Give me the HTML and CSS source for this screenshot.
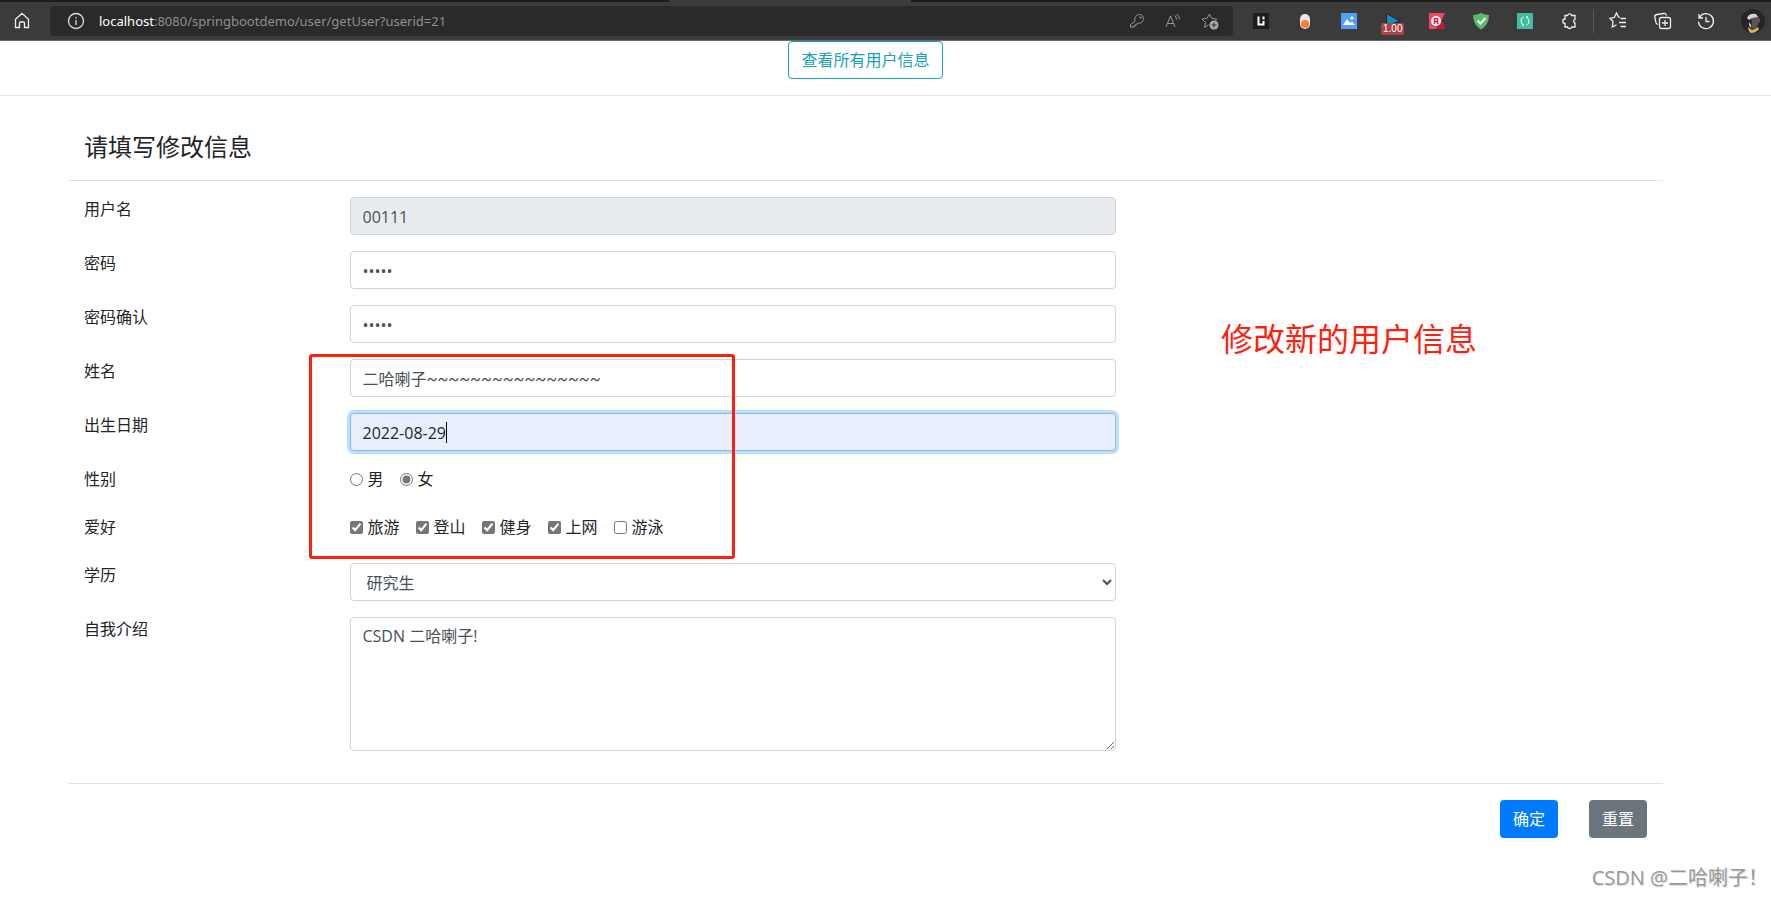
FILE: index.html
```html
<!DOCTYPE html>
<html lang="zh-CN">
<head>
    <meta charset="UTF-8">
    <meta name="viewport" content="width=device-width, initial-scale=1.0">
    <title>修改用户信息</title>
    <link rel="stylesheet" href="styles.css">
</head>
<body>
    <div class="tabs"><div class="tab-active"></div></div>
    <div class="toolbar">
        <button class="tool" type="button" aria-label="Home">
            <svg width="16" height="18" viewBox="0 0 16 18"><path d="M1.5 7.3 8 1.3l6.500 6V15.500h-4V11q0-1-1-1h-3q-1 0-1 1v4.500h-4z"/></svg>
        </button>
        <div class="address">
            <svg class="info" width="18" height="18" viewBox="0 0 18 18"><circle cx="9" cy="9" r="7.500"/><path d="M9 8v5M9 5v1.500"/></svg>
            <div class="url"><span class="host">localhost</span>:8080/springbootdemo/user/getUser?userid=21</div>
            <div class="address-icons">
                <svg width="16" height="16" viewBox="0 0 16 16"><path d="M6 8.500C5 5 7 1.500 10.500 1.500S15 5 14 7.500s-3 3-4.500 2.500L8.500 11H7v1.500H5.500V14H1.500v-2.500z"/><circle cx="11.500" cy="4.500" r=".7"/></svg>
                <svg width="16" height="16" viewBox="0 0 16 16"><path d="M1 14 5.500 3 10 14M2.500 10.500h6M9.500 2.500q2 1.500 2 4M11.500 1q3 2 3 5.500"/></svg>
                <svg width="18" height="18" viewBox="0 0 18 18"><path d="m7.500 13-4 2.500 1-5-3.500-3.500 5-.6L8.500 2l2.200 4.400 5 .6-1.500 1.500"/><circle class="dot" cx="13" cy="13" r="4.500"/><path class="plus" d="M13 10.500v5M10.500 13h5"/></svg>
            </div>
        </div>
        <div class="extensions">
            <svg width="24" height="24" viewBox="0 0 24 24"><path fill="#1e1e1e" d="M4 4h16v16H4z"/><path class="mark" d="M9.500 7.500v8h5v-3.500M14.500 7.500v3"/></svg>
            <svg width="24" height="24" viewBox="0 0 24 24"><rect x="7" y="5" width="10" height="15" rx="5" fill="#e8e6e6"/><circle cx="12" cy="15" r="4" fill="#f58232"/></svg>
            <svg width="24" height="24" viewBox="0 0 24 24"><path fill="#52a0f5" d="M4 4h16v16H4z"/><path fill="#fff" d="m6 16 4-6 3 4 2-1.500 3 3.500z"/><circle cx="15" cy="9" r="1.500" fill="#fff"/></svg>
            <div class="speed">
                <svg width="24" height="24" viewBox="0 0 24 24"><path fill="#118bc2" stroke="#222" d="M5.500 4.500 19 12 5.500 17z"/></svg>
                <span class="badge">1.00</span>
            </div>
            <svg width="24" height="24" viewBox="0 0 24 24"><path fill="#f24560" d="M4 4h16l-4 8 4 8H4z"/><path fill="#c81836" d="m14 14 4-1 2 7h-9z"/><circle cx="11" cy="12" r="5" fill="#fff"/><path fill="none" stroke="#d32042" stroke-width="1.500" d="M9.500 15V9.500h2q1.500 0 1.500 1.500t-1.500 1.500h-2M11.500 12.500l2 2.500"/></svg>
            <svg width="24" height="24" viewBox="0 0 24 24"><path fill="#5cba6b" d="M12 4q4 2 8 2-.2 10-8 14.500Q4.200 16 4 6q4 0 8-2z"/><path class="check" d="m8.500 11.500 3 3 5-5.500"/></svg>
            <svg width="24" height="24" viewBox="0 0 24 24"><path fill="#43bda0" d="M4 4h16v16H4z"/><path class="sync" d="M10.500 8Q7.500 9 8 12.500q.5 2.500 3 3.500l-2 .3M13.500 16q3-1 2.500-4.500-.5-2.500-3-3.500l2-.3"/></svg>
            <svg class="line" width="24" height="24" viewBox="0 0 24 24"><path d="M8 6.500h2.500a2.200 2.200 0 0 1 4.200 0h3.300v4a1.800 1.800 0 0 0 0 3.500v4h-3.300a2.200 2.200 0 0 1-4.200 0H8v-3.500a2.200 2.200 0 0 1 0-4.500z"/></svg>
        </div>
        <div class="browser-icons">
            <svg class="line" width="24" height="24" viewBox="0 0 24 24"><path d="M14 8.500 12.500 8 10.500 4 8.300 8.500 4 9.300l3 3.200L6.300 18l4.200-2.300M14.500 9.500H20M13 13.500h7M14.500 17.500H20"/></svg>
            <svg class="line" width="24" height="24" viewBox="0 0 24 24"><path d="M16.500 6.500Q16 4.200 14 4.500L7 5.500Q4.500 6 4.800 8l1 5q.3 2 2 2.500"/><rect x="9.500" y="8.500" width="11" height="11" rx="2"/><path d="M15 11v6M12 14h6"/></svg>
            <svg class="line" width="24" height="24" viewBox="0 0 24 24"><path d="M5 5v4h4M5.300 8.700a7.500 7.500 0 1 1-.8 4M12 8v4.500h3.500"/></svg>
            <svg class="avatar" width="24" height="24" viewBox="0 0 24 24"><circle cx="12" cy="12" r="12" fill="#252525"/><path fill="#5b5358" d="M10 9q5-3 8 0l-1 7-3 4-4-1 1-5z"/><path fill="#cfd4d8" d="M6 9q2-5 9-4l2 3-6 1-3 2z"/><path fill="#cfd4d8" d="m8 13 2 3v3l-2-3z"/><path fill="#b5425c" d="m17 7 2 4-1 4z"/><path fill="#d6b553" d="m7 18 4 3 3-1 3-2 1 2q-3 4-8 4-3-2-3-6z"/></svg>
        </div>
    </div>

    <div class="page">
        <a class="btn btn-outline" href="#">查看所有用户信息</a>
    </div>
    <hr>

    <div class="page">
        <form class="user-form">
            <h4 class="title">请填写修改信息</h4>
            <div class="form-body">
                <div class="row">
                    <label for="userName">用户名</label>
                    <input class="field" type="text" id="userName" value="00111" readonly>
                </div>
                <div class="row">
                    <label for="password">密码</label>
                    <input class="field" type="password" id="password" value="12345">
                </div>
                <div class="row">
                    <label for="password2">密码确认</label>
                    <input class="field" type="password" id="password2" value="12345">
                </div>
                <div class="row">
                    <label for="realName">姓名</label>
                    <input class="field name" type="text" id="realName" value="二哈喇子~~~~~~~~~~~~~~~~">
                </div>
                <div class="row">
                    <label for="birthday">出生日期</label>
                    <div class="date">
                        <input class="field active" type="text" id="birthday" value="2022-08-29">
                        <span class="caret"></span>
                    </div>
                </div>
                <div class="row row-checks" role="radiogroup" aria-labelledby="sex">
                    <span id="sex">性别</span>
                    <div class="checks">
                        <label><input type="radio" name="sex">男</label>
                        <label><input type="radio" name="sex" checked>女</label>
                    </div>
                </div>
                <div class="row row-checks" role="group" aria-labelledby="hobby">
                    <span id="hobby">爱好</span>
                    <div class="checks">
                        <label><input type="checkbox" checked>旅游</label>
                        <label><input type="checkbox" checked>登山</label>
                        <label><input type="checkbox" checked>健身</label>
                        <label><input type="checkbox" checked>上网</label>
                        <label><input type="checkbox">游泳</label>
                    </div>
                </div>
                <div class="row">
                    <label for="education">学历</label>
                    <select class="field" id="education">
                        <option>研究生</option>
                    </select>
                </div>
                <div class="row">
                    <label for="intro">自我介绍</label>
                    <textarea class="field" id="intro" rows="5">CSDN 二哈喇子!</textarea>
                </div>
            </div>
            <div class="form-footer">
                <button class="btn btn-primary" type="submit">确定</button>
                <button class="btn btn-secondary" type="reset">重置</button>
            </div>
            <!-- notes drawn over the form -->
            <div class="mark-box"></div>
            <div class="mark-text">修改新的用户信息</div>
        </form>
    </div>
    <div class="watermark">CSDN @二哈喇子！</div>
</body>
</html>
```

FILE: styles.css
```css
* {
    box-sizing: border-box;
}

body {
    margin: 0;
    background-color: #fff;
    color: #212529;
    font-family: "Open Sans", "Noto Sans CJK SC", sans-serif;
    font-size: 16px;
    line-height: 24px;
}

input, select, textarea, button {
    font: inherit;
}

/* Browser bar */
.tabs {
    display: flex;
    justify-content: center;
    height: 2px;
    padding-right: 191px;
    background-color: #1d1d1d;
}

.tab-active {
    width: 242px;
    background-color: #3b3b3b;
}

.toolbar {
    display: flex;
    align-items: center;
    height: 39px;
    padding: 0 6px 0 14px;
    background-color: #3b3b3b;
    border-bottom: 1px solid #6b6b6b;
}

.toolbar svg {
    display: block;
}

.tool {
    padding: 0;
    border: none;
    background: none;
}

.tool svg, .line {
    fill: none;
    stroke: #eee;
    stroke-width: 1.3;
}

.address {
    display: flex;
    flex: 1;
    align-items: center;
    height: 30px;
    margin-left: 20px;
    padding: 0 14px 0 17px;
    border-radius: 4px;
    background-color: #2a2a2a;
}

.info {
    fill: none;
    stroke: #ddd;
    stroke-width: 1.3;
}

.url {
    flex: 1;
    margin-left: 14px;
    color: #8f8f8f;
    font-family: "Noto Sans", sans-serif;
    font-size: 13px;
}

.host {
    color: #fff;
}

.address-icons {
    display: flex;
    align-items: center;
    gap: 20px;
    fill: none;
    stroke: #999;
}

.dot {
    fill: #aaa;
    stroke: none;
}

.plus {
    stroke: #2a2a2a;
}

.extensions {
    display: flex;
    gap: 20px;
    margin-left: 16px;
    padding-right: 12px;
    border-right: 1px solid #5c5c5c;
}

.mark, .check, .sync {
    fill: none;
    stroke: #fff;
    stroke-width: 2;
}

.sync {
    stroke-width: 1;
}

.speed {
    position: relative;
}

.badge {
    position: absolute;
    top: 14px;
    left: 0;
    padding: 0 2px;
    border-radius: 2px;
    background-color: #a94448;
    color: #fff;
    font-family: "Liberation Sans", sans-serif;
    font-size: 10px;
    line-height: 12px;
}

.browser-icons {
    display: flex;
    gap: 20px;
    margin-left: 12px;
}

.avatar {
    margin-left: 3px;
}

/* Page */
.page {
    padding: 0 108px 0 68px;
    text-align: center;
}

hr {
    margin: 16px 0;
    border: none;
    border-top: 1px solid #e5e5e5;
}

.btn {
    display: inline-block;
    padding: 6px 12px;
    border: 1px solid transparent;
    border-radius: 4px;
    text-decoration: none;
    vertical-align: top;
}

.btn-outline {
    color: #17a2b8;
    border-color: #17a2b8;
}

.btn-primary {
    background-color: #007bff;
    color: #fff;
}

.btn-secondary {
    background-color: #6c757d;
    color: #fff;
}

.user-form {
    position: relative;
    text-align: left;
}

.title {
    margin: 0;
    padding: 17px 16px 15px;
    border-bottom: 1px solid #dee2e6;
    font-size: 24px;
    font-weight: 400;
    line-height: 36px;
}

.form-body {
    padding: 16px 1px;
}

.row {
    display: grid;
    grid-template-columns: 2fr 6fr 4fr;
    align-items: start;
    margin-bottom: 16px;
}

.row > * {
    margin: 0 15px;
}

.row-checks {
    margin-bottom: 24px;
}

.field {
    display: block;
    height: 38px;
    padding: 7px 12px 5px;
    border: 1px solid #ced4da;
    border-radius: 4px;
    background-color: #fff;
    color: #495057;
}

.field[readonly] {
    background-color: #e9ecef;
}

/* wider tildes */
.name {
    padding: 6px 12px;
    font-family: Roboto, "Noto Sans CJK SC", sans-serif;
}

select.field {
    padding-right: 0;
}

textarea.field {
    height: auto;
    padding: 6px 12px;
}

.date {
    position: relative;
}

.date .field {
    width: 100%;
}

.active {
    border-color: #80bdff;
    background-color: #e8f0fe;
    color: #212529;
    box-shadow: 0 0 0 3px #bfdeff;
}

.caret {
    position: absolute;
    top: 9px;
    left: 96px;
    width: 1px;
    height: 21px;
    background-color: #000;
}

.checks {
    display: flex;
    gap: 16px;
}

.checks label {
    display: flex;
    align-items: center;
}

.checks input {
    width: 13px;
    height: 13px;
    margin: 0 5px 0 0;
    accent-color: #767676;
}

.form-footer {
    display: flex;
    justify-content: flex-end;
    gap: 31px;
    padding: 16px;
    border-top: 1px solid #dee2e6;
}

.mark-box {
    position: absolute;
    top: 242px;
    left: 241px;
    width: 426px;
    height: 205px;
    border: 3px solid #ff1f0f;
    border-radius: 3px;
}

.mark-text {
    position: absolute;
    top: 207px;
    left: 1153px;
    color: #ff1f0f;
    font-size: 32px;
    line-height: 40px;
    white-space: nowrap;
}

.watermark {
    position: absolute;
    right: 3px;
    bottom: 7px;
    color: #999;
    font-size: 20px;
    text-shadow: 1px 1px 0 #ddd;
}
```
